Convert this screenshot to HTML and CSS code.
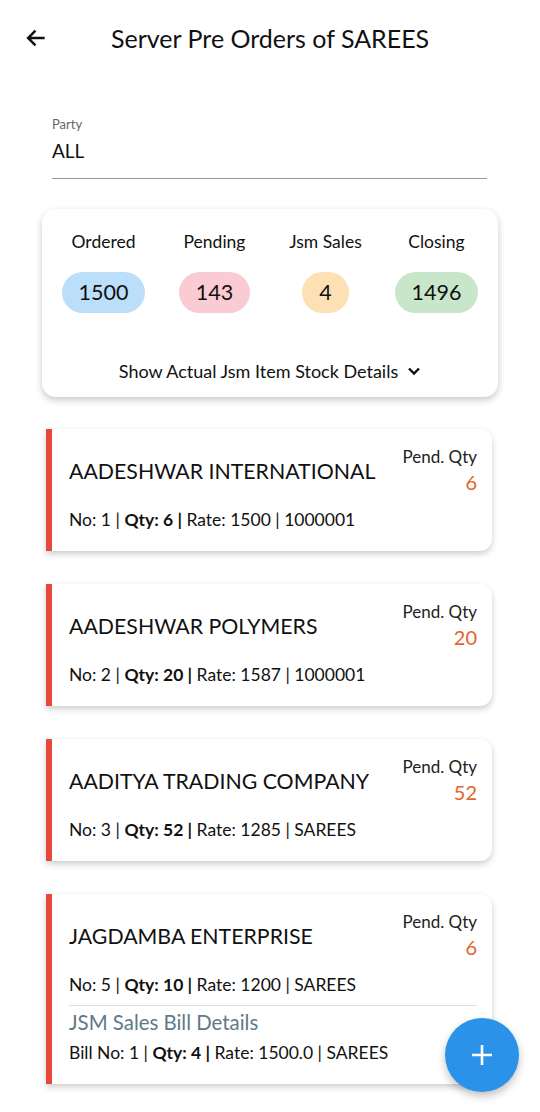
FILE: index.html
```html
<!DOCTYPE html>
<html lang="en">
<head>
<meta charset="utf-8">
<title>Server Pre Orders of SAREES</title>
<link rel="stylesheet" href="styles.css">
</head>
<body>
<div class="topbar">
  <svg class="back" width="26" height="26" viewBox="0 0 24 24"><path d="M20 12H5M11.5 5.2L4.7 12l6.8 6.8" fill="none" stroke="#111" stroke-width="2.3"/></svg>
  <h1 class="title">Server Pre Orders of SAREES</h1>
</div>

<div class="field">
  <div class="field-label">Party</div>
  <div class="field-value">ALL</div>
</div>

<div class="summary">
  <div class="stats">
    <div class="stat"><span class="stat-label">Ordered</span><span class="pill blue">1500</span></div>
    <div class="stat"><span class="stat-label">Pending</span><span class="pill pink">143</span></div>
    <div class="stat"><span class="stat-label">Jsm Sales</span><span class="pill orange">4</span></div>
    <div class="stat"><span class="stat-label">Closing</span><span class="pill green">1496</span></div>
  </div>
  <div class="more">Show Actual Jsm Item Stock Details
    <svg width="14" height="10" viewBox="0 0 14 10"><path d="M2 2.5l5 5 5-5" fill="none" stroke="#111" stroke-width="2.4"/></svg>
  </div>
</div>

<div class="orders">
  <div class="order">
    <div class="order-top">
      <div class="order-name">AADESHWAR INTERNATIONAL</div>
      <div class="pend"><div class="pend-label">Pend. Qty</div><div class="pend-value">6</div></div>
    </div>
    <div class="order-info">No: 1 | <b>Qty: 6 |</b> Rate: 1500 | 1000001</div>
  </div>

  <div class="order">
    <div class="order-top">
      <div class="order-name">AADESHWAR POLYMERS</div>
      <div class="pend"><div class="pend-label">Pend. Qty</div><div class="pend-value">20</div></div>
    </div>
    <div class="order-info">No: 2 | <b>Qty: 20 |</b> Rate: 1587 | 1000001</div>
  </div>

  <div class="order">
    <div class="order-top">
      <div class="order-name">AADITYA TRADING COMPANY</div>
      <div class="pend"><div class="pend-label">Pend. Qty</div><div class="pend-value">52</div></div>
    </div>
    <div class="order-info">No: 3 | <b>Qty: 52 |</b> Rate: 1285 | SAREES</div>
  </div>

  <div class="order">
    <div class="order-top">
      <div class="order-name">JAGDAMBA ENTERPRISE</div>
      <div class="pend"><div class="pend-label">Pend. Qty</div><div class="pend-value">6</div></div>
    </div>
    <div class="order-info">No: 5 | <b>Qty: 10 |</b> Rate: 1200 | SAREES</div>
    <div class="bills">
      <div class="bills-title">JSM Sales Bill Details</div>
      <div class="bill-info">Bill No: 1 | <b>Qty: 4 |</b> Rate: 1500.0 | SAREES</div>
    </div>
  </div>
</div>

<button class="fab" type="button">
  <svg width="22" height="22" viewBox="0 0 22 22"><path d="M11 1v20M1 11h20" fill="none" stroke="#fff" stroke-width="2.6"/></svg>
</button>
</body>
</html>
```

FILE: styles.css
```css
body { margin: 0; background: #fff; font-family: Lato, "Noto Sans", sans-serif; color: #111; }

.topbar { display: flex; align-items: center; height: 76px; padding-left: 23px; }
.topbar .back { display: block; }
.title { margin: 0 0 0 62px; font-size: 25px; font-weight: 400; }

.field { margin: 40px 53px 0 52px; padding-bottom: 15px; border-bottom: 1px solid #9a9a9a; }
.field-label { font-size: 13px; line-height: 16px; color: #666; }
.field-value { margin-top: 7px; font-size: 19px; line-height: 24px; }

.summary { margin: 30px 42px 0 42px; height: 188px; box-sizing: border-box; padding: 22px 6px 15px; background: #fff; border-radius: 14px; box-shadow: 0 3px 7px rgba(0,0,0,.22); }
.stats { display: grid; grid-template-columns: repeat(4, 1fr); }
.stat { display: flex; flex-direction: column; align-items: center; }
.stat-label { font-size: 17.5px; line-height: 22px; }
.pill { margin-top: 19px; height: 41px; line-height: 41px; padding: 0 17px; min-width: 10px; text-align: center; border-radius: 21px; font-size: 21.5px; }
.pill.blue { background: #bbdefb; }
.pill.pink { background: #fbcbd3; }
.pill.orange { background: #fde0b3; }
.pill.green { background: #c8e6c9; }
.more { display: flex; align-items: center; justify-content: center; gap: 9px; margin-top: 47px; font-size: 18px; line-height: 22px; }
.more svg { display: block; }

.orders { display: flex; flex-direction: column; gap: 33px; margin: 32px 48px 40px 46px; }
.order { background: #fff; border-left: 6px solid #e8473c; border-radius: 0 12px 12px 0; box-shadow: 0 3px 6px rgba(0,0,0,.2); padding: 18px 15px 21px 17px; }
.order-top { display: flex; align-items: center; justify-content: space-between; }
.order-name { font-size: 21.3px; line-height: 28px; }
.pend { text-align: right; }
.pend-label { font-size: 17px; line-height: 20px; color: #222; }
.pend-value { margin-top: 3px; font-size: 20px; line-height: 24px; color: #e4622d; }
.order-info { margin-top: 16px; font-size: 17.5px; line-height: 20px; }
.order-info b, .bill-info b { font-weight: 700; }

.bills { margin-top: 10px; border-top: 1px solid #ddd; padding-top: 3px; }
.bills-title { font-size: 20.4px; line-height: 26px; color: #5e7a88; }
.bill-info { margin-top: 8px; font-size: 17.5px; line-height: 20px; }

.fab { position: fixed; right: 21px; bottom: 20px; width: 74px; height: 74px; border: 0; border-radius: 50%; background: #2b92ea; display: flex; align-items: center; justify-content: center; box-shadow: 0 4px 8px rgba(0,0,0,.25); padding: 0; }
.fab svg { display: block; }
```
